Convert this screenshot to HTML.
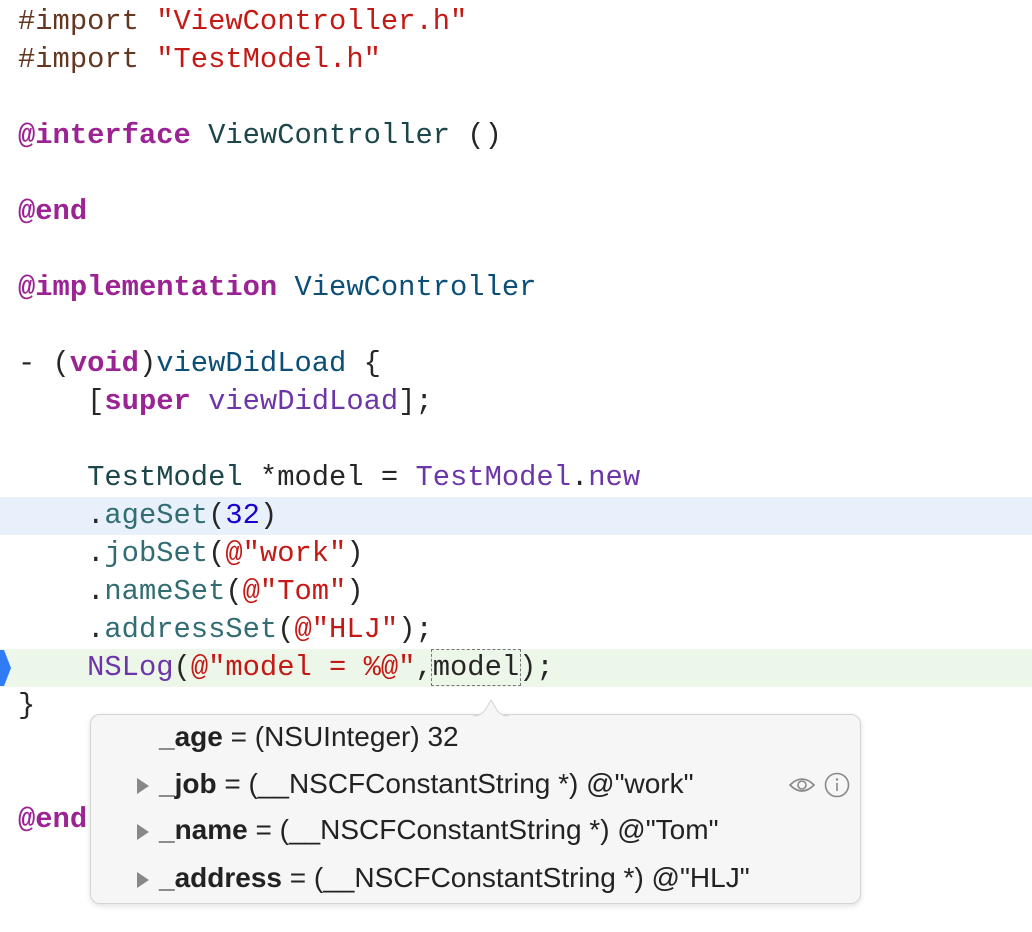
<!DOCTYPE html>
<html><head><meta charset="utf-8"><style>
body{margin:0;width:1032px;height:932px;background:#fff;overflow:hidden;position:relative}
.code{position:absolute;left:0;top:3px;width:1032px;font-family:"Liberation Mono",monospace;font-size:28.8px;color:#262626}
.l{height:38px;line-height:38px;padding-left:18px;white-space:pre}
.kw{color:#9b2393;font-weight:bold}
.pp{color:#643820}
.st{color:#c41a16}
.cl{color:#1c464a}
.cd{color:#0b4f79}
.mt{color:#326d74}
.pm{color:#6c36a9}
.nm{color:#1c00cf}
.hb{background:#e8f1fb}
.hg{background:#edf7e9}
.box{outline:1.5px dashed #777;outline-offset:1px}
.pop{position:absolute;left:90px;top:714px;width:769px;height:188px;background:#f6f6f6;border:1px solid #d4d4d4;border-radius:10px;box-shadow:0 2px 6px rgba(0,0,0,.12);font-family:"Liberation Sans",sans-serif;font-size:28px;color:#222}
.row{position:absolute;left:68px;white-space:pre}
.row b{font-weight:bold}
.tri{position:absolute;left:46px;width:0;height:0;border-left:12px solid #888;border-top:8px solid transparent;border-bottom:8px solid transparent}
</style></head><body>
<div class="code">
<div class="l"><span class="pp">#import </span><span class="st">"ViewController.h"</span></div>
<div class="l"><span class="pp">#import </span><span class="st">"TestModel.h"</span></div>
<div class="l"> </div>
<div class="l"><span class="kw">@interface</span> <span class="cl">ViewController</span> ()</div>
<div class="l"> </div>
<div class="l"><span class="kw">@end</span></div>
<div class="l"> </div>
<div class="l"><span class="kw">@implementation</span> <span class="cd">ViewController</span></div>
<div class="l"> </div>
<div class="l">- (<span class="kw">void</span>)<span class="cd">viewDidLoad</span> {</div>
<div class="l">    [<span class="kw">super</span> <span class="pm">viewDidLoad</span>];</div>
<div class="l"> </div>
<div class="l">    <span class="cl">TestModel</span> *model = <span class="pm">TestModel</span>.<span class="pm">new</span></div>
<div class="l hb">    .<span class="mt">ageSet</span>(<span class="nm">32</span>)</div>
<div class="l">    .<span class="mt">jobSet</span>(<span class="st">@"work"</span>)</div>
<div class="l">    .<span class="mt">nameSet</span>(<span class="st">@"Tom"</span>)</div>
<div class="l">    .<span class="mt">addressSet</span>(<span class="st">@"HLJ"</span>);</div>
<div class="l hg">    <span class="pm">NSLog</span>(<span class="st">@"model = %@"</span>,<span class="box">model</span>);</div>
<div class="l">}</div>
<div class="l"> </div>
<div class="l"> </div>
<div class="l"><span class="kw">@end</span></div>
</div>
<svg style="position:absolute;left:0;top:650px" width="12" height="36"><path d="M0 0 L4 0 L11 18 L4 36 L0 36 Z" fill="#2f7cf6"/></svg>
<div class="pop">
<svg style="position:absolute;left:382px;top:-25px" width="36" height="27"><path d="M0 26 Q8 26 12 20 L18 10 L24 20 Q28 26 36 26" fill="#f6f6f6" stroke="#d4d4d4" stroke-width="1"/></svg>
<div class="row" style="top:6px"><b>_age</b> = (NSUInteger) 32</div>
<div class="tri" style="top:63px"></div>
<div class="row" style="top:53px"><b>_job</b> = (__NSCFConstantString *) @"work"</div>
<div class="tri" style="top:109px"></div>
<div class="row" style="top:99px"><b>_name</b> = (__NSCFConstantString *) @"Tom"</div>
<div class="tri" style="top:157px"></div>
<div class="row" style="top:147px"><b>_address</b> = (__NSCFConstantString *) @"HLJ"</div>
<svg style="position:absolute;left:697px;top:57px" width="64" height="30">
<path d="M2 13 Q14 1 26 13 Q14 25 2 13 Z" fill="none" stroke="#888" stroke-width="1.6"/>
<circle cx="14" cy="13" r="4" fill="none" stroke="#888" stroke-width="1.6"/>
<circle cx="49" cy="13" r="11.5" fill="none" stroke="#888" stroke-width="1.6"/>
<line x1="49" y1="11" x2="49" y2="19" stroke="#888" stroke-width="1.6"/>
<circle cx="49" cy="7.5" r="1.2" fill="#888"/>
</svg>
</div>
</body></html>
